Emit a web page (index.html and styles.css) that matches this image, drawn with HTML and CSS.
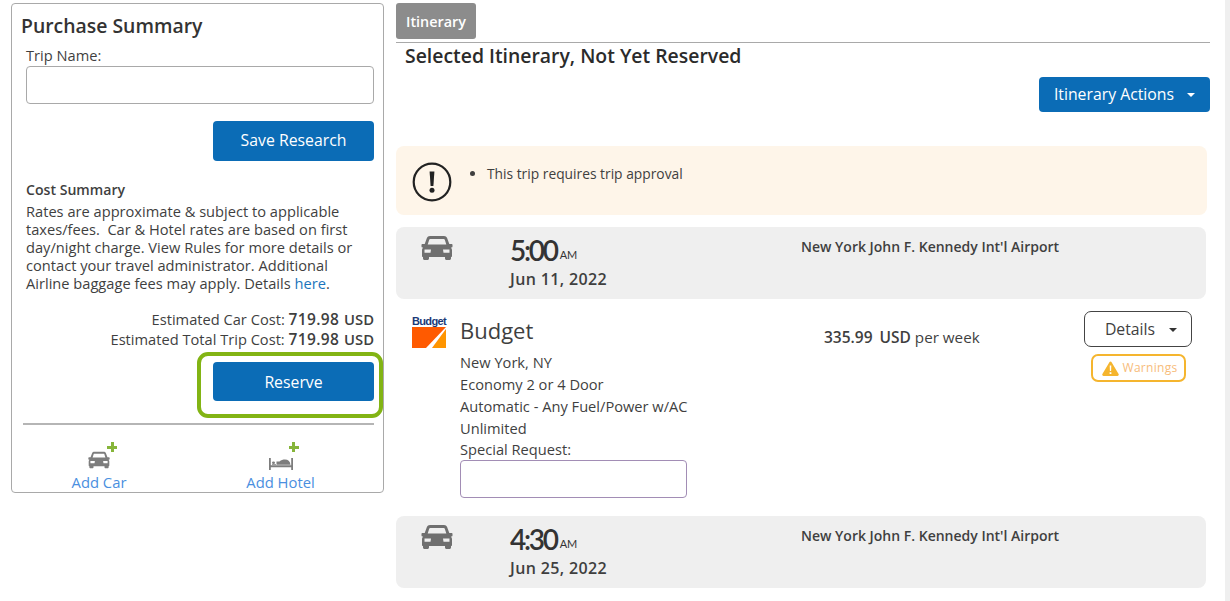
FILE: index.html
```html
<!DOCTYPE html>
<html lang="en">
<head>
<meta charset="utf-8">
<title>Itinerary</title>
<link rel="stylesheet" href="styles.css">
</head>
<body>
<svg class="defs" width="0" height="0" aria-hidden="true">
  <symbol id="car" viewBox="0 0 32 26">
    <path fill="currentColor" fill-rule="evenodd" d="M9 1h14c1.500 0 2.600.8 3.100 2l2.200 6h2.200c.6 0 1 .4 1 1v1.500c0 .5-.4 1-1 1h-.7c.8.7 1.200 1.600 1.200 2.600V21c0 .6-.4 1-1 1v1.500c0 .9-.7 1.500-1.500 1.500h-3c-.8 0-1.500-.6-1.500-1.500V22H8v1.500c0 .9-.7 1.500-1.500 1.500h-3C2.700 25 2 24.400 2 23.500V22c-.6 0-1-.4-1-1v-5.900c0-1 .4-1.900 1.200-2.600h-.7c-.6 0-1-.5-1-1V10c0-.6.4-1 1-1h2.200l2.200-6C6.400 1.800 7.500 1 9 1zm.2 3c-.5 0-.8.200-1 .7L6.700 9.500h18.600l-1.500-4.800c-.2-.5-.5-.7-1-.7zM3.500 14.500v3.200h6l.5-3.200zm25 0H22l.5 3.200h6z"/>
  </symbol>
</svg>

<div class="page">
  <aside class="summary">
    <h2 class="summary-title">Purchase Summary</h2>
    <label class="field-label" for="trip">Trip Name:</label>
    <input class="text-input" id="trip" type="text">
    <div class="save-row"><button class="btn btn-save">Save Research</button></div>
    <h3 class="cost-title">Cost Summary</h3>
    <p class="cost-copy">Rates are approximate &amp; subject to applicable taxes/fees.&nbsp; Car &amp; Hotel rates are based on first day/night charge. View Rules for more details or contact your travel administrator. Additional Airline baggage fees may apply. Details <a href="#">here</a>.</p>
    <div class="totals">
      <div>Estimated Car Cost: <b>719.98</b> <b class="cur">USD</b></div>
      <div>Estimated Total Trip Cost: <b>719.98</b> <b class="cur">USD</b></div>
    </div>
    <div class="reserve-row">
      <button class="btn btn-reserve">Reserve</button>
      <span class="highlight"></span>
    </div>
    <div class="add-row">
      <a class="add-item" href="#">
        <span class="add-icon">
          <svg class="add-glyph" width="22" height="18"><use href="#car"/></svg>
          <span class="plus"></span>
        </span>
        Add Car
      </a>
      <a class="add-item add-hotel" href="#">
        <span class="add-icon">
          <svg class="bed-glyph" width="24" height="16" viewBox="0 0 24 20" preserveAspectRatio="none"><path fill="currentColor" d="M0 5h1.800v9H22.200V5H24v15h-1.800v-3.500H1.800V20H0zM3 11a1.500 1.500 0 1 1 3 0 1.500 1.500 0 0 1-3 0zM7.500 9.500h3C12 7.500 14 7 16 7c3 0 5 2 5.500 6.500H7.500zM3 12.600h4v.9H3z"/></svg>
          <span class="plus"></span>
        </span>
        Add Hotel
      </a>
    </div>
  </aside>

  <main class="itinerary">
    <div class="tab">Itinerary</div>
    <h2 class="it-title">Selected Itinerary, Not Yet Reserved</h2>
    <div class="actions-row">
      <button class="btn btn-actions">Itinerary Actions<span class="caret"></span></button>
    </div>

    <div class="notice">
      <svg class="notice-icon" width="40" height="40" viewBox="0 0 40 40"><circle cx="20" cy="20" r="18.300" fill="none" stroke="#222" stroke-width="2.200"/><path fill="#222" d="M17.600 9.500h4.800l-1 14.500h-2.800z"/><circle cx="20" cy="28.300" r="2.500" fill="#222"/></svg>
      <ul class="notice-list"><li>This trip requires trip approval</li></ul>
    </div>

    <section class="leg">
      <svg class="leg-car" width="32" height="26"><use href="#car"/></svg>
      <div class="leg-time">
        <div class="time">5:00<small>AM</small></div>
        <div class="date">Jun 11, 2022</div>
      </div>
      <div class="leg-place">New York John F. Kennedy Int'l Airport</div>
    </section>

    <section class="rental">
      <div class="logo">
        <span class="logo-word">Budget</span>
        <svg width="34" height="21" viewBox="0 0 34 22" preserveAspectRatio="none"><rect width="34" height="22" fill="#ff5a00"/><path fill="#ff9500" d="M34 2v20H20z"/><path fill="#fff" d="M34 0v2L20 22h-6z"/></svg>
      </div>
      <div class="rental-info">
        <div class="vendor">Budget</div>
        <div>New York, NY</div>
        <div>Economy 2 or 4 Door</div>
        <div>Automatic - Any Fuel/Power w/AC</div>
        <div>Unlimited</div>
        <label class="special-label" for="req">Special Request:</label>
        <input class="request-input" id="req" type="text">
      </div>
      <div class="rate"><b>335.99</b> <b class="rate-cur">USD</b> per week</div>
      <div class="rental-actions">
        <button class="btn-details">Details<span class="caret caret-dark"></span></button>
        <span class="warnings">
          <svg width="17" height="15" viewBox="0 0 17 15"><path fill="#f5b52e" d="M8.500.5c.5 0 .9.300 1.100.7l7 11.700c.5.900-.1 2.100-1.100 2.100H1.500c-1 0-1.600-1.200-1.100-2.100l7-11.700c.2-.4.600-.7 1.100-.7z"/><path fill="#fff" d="M7.700 4.500h1.600l-.2 5.500H7.900zM7.600 11.200h1.800V13H7.600z"/></svg>
          Warnings
        </span>
      </div>
    </section>

    <section class="leg leg-last">
      <svg class="leg-car" width="32" height="26"><use href="#car"/></svg>
      <div class="leg-time">
        <div class="time">4:30<small>AM</small></div>
        <div class="date">Jun 25, 2022</div>
      </div>
      <div class="leg-place">New York John F. Kennedy Int'l Airport</div>
    </section>
  </main>
  <div class="scroll-track"></div>
</div>
</body>
</html>
```

FILE: styles.css
```css
* { box-sizing: border-box; }
html, body { height: 100%; }
body {
  margin: 0;
  overflow: hidden;
  background: #fff;
  color: #3f3f3f;
  font: 14.650px/22px "Open Sans", sans-serif;
}
.defs { position: absolute; }
.page {
  display: flex;
  align-items: flex-start;
  height: 601px;
  padding: 3px 0 0 11px;
}
.btn {
  display: block;
  border: 0;
  border-radius: 4px;
  background: #0b6cb6;
  color: #fff;
  font: 15.800px/22px "Open Sans", sans-serif;
  padding: 0;
}

/* Purchase summary */
.summary {
  flex: none;
  width: 373px;
  height: 490px;
  border: 1px solid #a9a9a9;
  border-radius: 4px;
  padding: 8px 9px 0 11px;
}
.summary-title {
  margin: 0 0 6px -2px;
  font-size: 19.400px;
  line-height: 27px;
  font-weight: 600;
  color: #333;
}
.field-label { display: block; margin-left: 3px; line-height: 20px; }
.text-input {
  display: block;
  width: 348px;
  height: 38px;
  margin: 1px 0 0 3px;
  border: 1px solid #a9a9a9;
  border-radius: 4px;
  background: #fff;
}
.save-row { display: flex; justify-content: flex-end; margin-top: 17px; }
.btn-save { width: 161px; height: 40px; padding-bottom: 2px; }
.cost-title {
  margin: 18px 0 0 3px;
  font-size: 14.100px;
  line-height: 22px;
  font-weight: 600;
}
.cost-copy { margin: 1px 0 0 3px; width: 330px; line-height: 18px; }
.cost-copy a { color: #1b75bc; text-decoration: none; }
.totals { margin-top: 17px; text-align: right; line-height: 20px; }
.totals b { font-weight: 600; font-size: 15.500px; letter-spacing: .35px; }
.totals .cur { margin-left: 1px; font-size: 14.800px; letter-spacing: 0; }
.reserve-row {
  position: relative;
  display: flex;
  justify-content: flex-end;
  margin-top: 13px;
  padding-bottom: 22px;
  border-bottom: 2px solid #b5b5b5;
}
.btn-reserve { width: 161px; height: 39px; }
.highlight {
  position: absolute;
  top: -10px;
  right: -9px;
  width: 186px;
  height: 66px;
  border: 4px solid #82b414;
  border-radius: 11px;
  pointer-events: none;
}
.add-row { display: flex; margin-top: 17px; }
.add-item {
  flex: none;
  display: flex;
  flex-direction: column;
  align-items: center;
  width: 152px;
  color: #4a8fe0;
  font-size: 14.800px;
  line-height: 20px;
  text-decoration: none;
}
.add-hotel { width: 206px; padding-left: 5px; }
.add-icon { position: relative; display: block; height: 30px; width: 24px; color: #7d7d7d; }
.add-glyph { display: block; margin: 9px 0 0 1px; }
.bed-glyph { display: block; margin-top: 12px; }
.plus {
  position: absolute;
  top: 0;
  right: -6px;
  width: 10px;
  height: 10px;
  background:
    linear-gradient(#86b53a, #86b53a) center / 10px 3px no-repeat,
    linear-gradient(#86b53a, #86b53a) center / 3px 10px no-repeat;
}

/* Itinerary */
.itinerary { flex: none; width: 814px; margin-left: 12px; }
.tab {
  width: 80px;
  height: 36px;
  margin-bottom: 3px;
  border-radius: 3px;
  background: #8c8c8c;
  color: #fff;
  font-size: 14.400px;
  font-weight: 600;
  line-height: 37px;
  text-align: center;
}
.it-title {
  margin: 0;
  padding: 0 0 0 9px;
  border-top: 1px solid #a9a9a9;
  font-size: 19.400px;
  line-height: 26px;
  font-weight: 600;
  color: #2b2b2b;
}
.actions-row { display: flex; justify-content: flex-end; margin-top: 8px; }
.btn-actions {
  display: flex;
  align-items: center;
  justify-content: center;
  width: 171px;
  height: 35px;
  padding-bottom: 2px;
}
.caret {
  width: 0;
  height: 0;
  margin: 2px 0 0 13px;
  border: 4.500px solid transparent;
  border-top-color: #fff;
  border-bottom-width: 0;
}
.caret-dark { border-top-color: #333; margin: 2px 0 0 14px; }
.notice {
  display: flex;
  width: 811px;
  height: 69px;
  margin-top: 34px;
  border-radius: 8px;
  background: #fef5e9;
  padding: 16px 0 0 16px;
}
.notice-icon { flex: none; }
.notice-list { margin: 0; padding: 0 0 0 35px; font-size: 13.800px; line-height: 26px; }
.notice-list li { margin-top: -1px; }
.leg {
  display: flex;
  width: 810px;
  height: 72px;
  margin-top: 12px;
  border-radius: 8px;
  background: #efefef;
}
.leg-car { flex: none; margin: 8px 0 0 25px; color: #6f6f6f; }
.leg-time { width: 291px; margin-left: 57px; padding-top: 10px; }
.time {
  font: 600 28px/26px Lato, sans-serif;
  letter-spacing: -2.300px;
  color: #333;
}
.time small { margin-left: 3px; font-size: 11px; letter-spacing: 0; font-weight: 400; vertical-align: 2px; }
.date { font-size: 16px; line-height: 22px; font-weight: 600; letter-spacing: .35px; }
.leg-place { padding-top: 9px; font-size: 14px; font-weight: 600; line-height: 22px; white-space: nowrap; }
.rental { display: flex; height: 205px; padding: 17px 0 0 16px; }
.logo { flex: none; width: 34px; display: flex; flex-direction: column; }
.logo-word {
  height: 11px;
  font: 700 11px/11px "Liberation Sans", sans-serif;
  letter-spacing: -.65px;
  color: #1b3a78;
}
.logo svg { display: block; margin-top: 0; }
.rental-info { width: 364px; margin-left: 14px; }
.vendor { margin: -1px 0 6px; font-size: 22px; line-height: 30px; }
.special-label { display: block; line-height: 21px; }
.request-input {
  display: block;
  width: 227px;
  height: 38px;
  margin-top: 0;
  border: 1px solid #a28db5;
  border-radius: 4px;
  background: #fff;
}
.rate { width: 260px; padding-top: 10px; font-size: 15.200px; white-space: nowrap; }
.rate b { font-weight: 600; font-size: 15.500px; }
.rate .rate-cur { margin-left: 3px; }
.rental-actions { display: flex; flex-direction: column; align-items: center; width: 108px; margin-top: -5px; }
.btn-details {
  display: flex;
  align-items: center;
  justify-content: center;
  width: 108px;
  height: 36px;
  border: 1px solid #444;
  border-radius: 7px;
  background: #fff;
  color: #3f3f3f;
  font: 15.800px/22px "Open Sans", sans-serif;
  padding: 0 0 0 6px;
}
.warnings {
  display: flex;
  align-items: center;
  gap: 4px;
  width: 95px;
  height: 28px;
  margin-top: 7px;
  padding-left: 9px;
  border: 2px solid #f5b52e;
  border-radius: 7px;
  color: #f7bc7a;
  font-size: 12px;
  letter-spacing: .3px;
}
.scroll-track {
  position: absolute;
  top: 0;
  right: 0;
  width: 5px;
  height: 601px;
  background: #efefef;
}
```
